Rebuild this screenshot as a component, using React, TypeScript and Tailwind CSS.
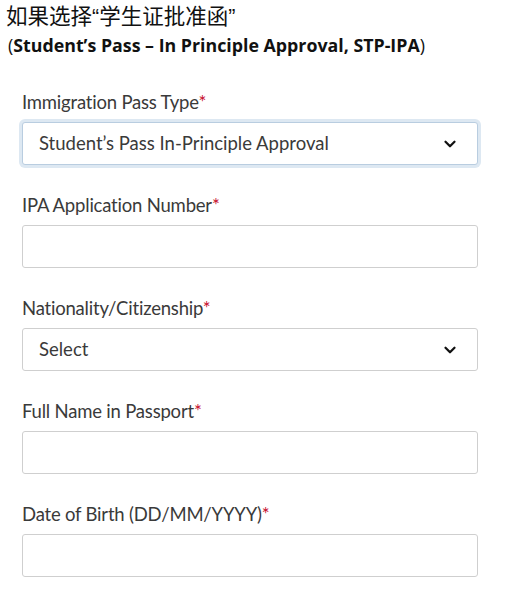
import { ChevronDown } from "lucide-react";

const labelFont = { fontFamily: "Lato, 'Noto Sans', sans-serif" };

function Label({ text }: { text: string }) {
  return (
    <div className="text-[18.5px] leading-[22px] text-[#3a3a3a] tracking-[-0.2px]">
      {text}
      <span className="text-[#c8102e]">*</span>
    </div>
  );
}

function SelectBox({ value, focused }: { value: string; focused?: boolean }) {
  return (
    <div
      className={`flex h-[43px] items-center justify-between rounded-[3px] border bg-white pl-[16px] pr-[18px] text-[18.5px] text-[#3a3a3a] ${
        focused
          ? "border-[#b9cde0] shadow-[0_0_0_3px_#dde8f2]"
          : "border-[#cfcfcf]"
      }`}
    >
      <span>{value}</span>
      <ChevronDown size={18} strokeWidth={3} className="text-[#111]" />
    </div>
  );
}

function TextBox() {
  return <div className="h-[43px] rounded-[3px] border border-[#cfcfcf] bg-white" />;
}

export default function App() {
  return (
    <div className="min-h-[612px] w-[513px] bg-white">
      <div className="pl-[6px]">
        <div
          className="text-[21.5px] leading-[30px] text-[#111]"
          style={{ fontFamily: "'Noto Sans CJK SC', sans-serif" }}
        >
          如果选择<span style={{ fontFamily: "'Liberation Sans', sans-serif" }}>“</span>学生证批准函<span style={{ fontFamily: "'Liberation Sans', sans-serif" }}>”</span>
        </div>
        <div
          className="pl-[2px] text-[17.8px] leading-[26px] text-[#111]"
          style={{ fontFamily: "'Open Sans', sans-serif" }}
        >
          <span className="font-normal">(</span>
          <span className="font-bold">
            Student’s Pass – In Principle Approval, STP-IPA
          </span>
          <span className="font-normal">)</span>
        </div>
      </div>

      <div className="flex flex-col gap-[29px] pl-[22px] pr-[35px] pt-[33px]" style={labelFont}>
        <div className="flex flex-col gap-[9px]">
          <Label text="Immigration Pass Type" />
          <SelectBox value="Student’s Pass In-Principle Approval" focused />
        </div>
        <div className="flex flex-col gap-[9px]">
          <Label text="IPA Application Number" />
          <TextBox />
        </div>
        <div className="flex flex-col gap-[9px]">
          <Label text="Nationality/Citizenship" />
          <SelectBox value="Select" />
        </div>
        <div className="flex flex-col gap-[9px]">
          <Label text="Full Name in Passport" />
          <TextBox />
        </div>
        <div className="flex flex-col gap-[9px]">
          <Label text="Date of Birth (DD/MM/YYYY)" />
          <TextBox />
        </div>
      </div>
    </div>
  );
}
